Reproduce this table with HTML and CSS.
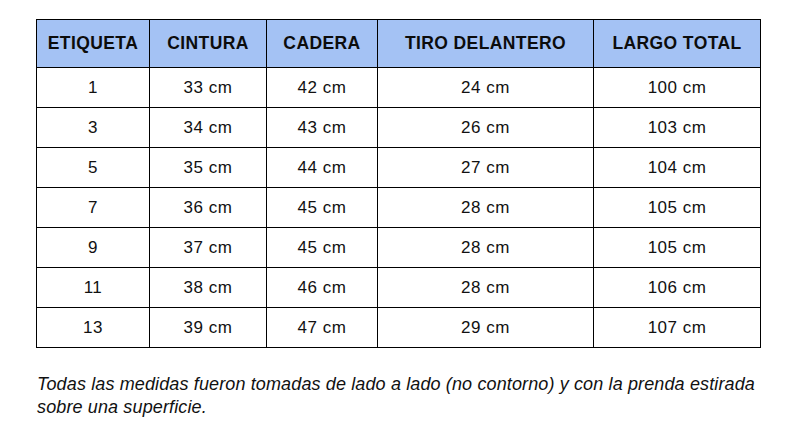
FILE: index.html
```html
<!DOCTYPE html>
<html lang="es">
<head>
<meta charset="utf-8">
<link rel="stylesheet" href="styles.css">
</head>
<body>
<div class="page">
  <table class="sizes">
    <colgroup>
      <col class="c1"><col class="c2"><col class="c3"><col class="c4"><col class="c5">
    </colgroup>
    <thead>
      <tr>
        <th>ETIQUETA</th>
        <th>CINTURA</th>
        <th>CADERA</th>
        <th>TIRO DELANTERO</th>
        <th>LARGO TOTAL</th>
      </tr>
    </thead>
    <tbody>
      <tr><td>1</td><td>33 cm</td><td>42 cm</td><td>24 cm</td><td>100 cm</td></tr>
      <tr><td>3</td><td>34 cm</td><td>43 cm</td><td>26 cm</td><td>103 cm</td></tr>
      <tr><td>5</td><td>35 cm</td><td>44 cm</td><td>27 cm</td><td>104 cm</td></tr>
      <tr><td>7</td><td>36 cm</td><td>45 cm</td><td>28 cm</td><td>105 cm</td></tr>
      <tr><td>9</td><td>37 cm</td><td>45 cm</td><td>28 cm</td><td>105 cm</td></tr>
      <tr><td>11</td><td>38 cm</td><td>46 cm</td><td>28 cm</td><td>106 cm</td></tr>
      <tr><td>13</td><td>39 cm</td><td>47 cm</td><td>29 cm</td><td>107 cm</td></tr>
    </tbody>
  </table>
  <p class="note">Todas las medidas fueron tomadas de lado a lado (no contorno) y con la prenda estirada sobre una superficie.</p>
</div>
</body>
</html>
```

FILE: styles.css
```css
html, body {
  margin: 0;
  padding: 0;
  background: #ffffff;
}
.page {
  padding: 19px 0 0 36px;
  font-family: "Liberation Sans", Arial, sans-serif;
  color: #000000;
}
.sizes {
  border-collapse: collapse;
  table-layout: fixed;
  width: 724px;
}
.c1 { width: 113px; }
.c2 { width: 117px; }
.c3 { width: 111px; }
.c4 { width: 216px; }
.c5 { width: 167px; }
.sizes th,
.sizes td {
  border: 1px solid #000000;
  text-align: center;
  padding: 0;
}
.sizes th {
  background: #a4c2f4;
  height: 47px;
  font-size: 17.5px;
  font-weight: bold;
  color: #0c0c0c;
  letter-spacing: 0.4px;
}
.sizes td {
  height: 39px;
  font-size: 17px;
  color: #111111;
  letter-spacing: 0.5px;
}
.note {
  margin: 25px 0 0 1px;
  width: 740px;
  font-size: 18px;
  font-style: italic;
  line-height: 23px;
  letter-spacing: 0.13px;
  color: #111111;
}
```
